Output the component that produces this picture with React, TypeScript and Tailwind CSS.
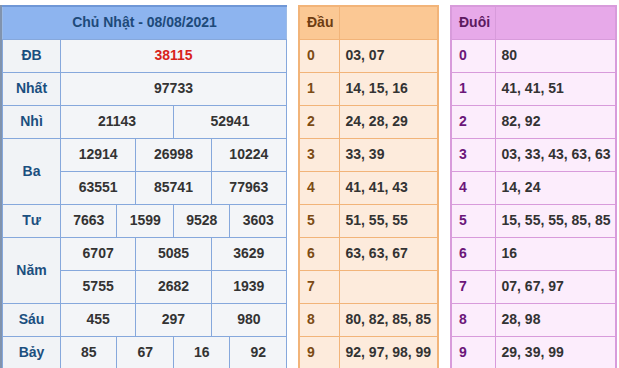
import React from "react";

const leftRows: { label: string; values: string[][]; red?: boolean }[] = [
  { label: "ĐB", values: [["38115"]], red: true },
  { label: "Nhất", values: [["97733"]] },
  { label: "Nhì", values: [["21143", "52941"]] },
  { label: "Ba", values: [["12914", "26998", "10224"], ["63551", "85741", "77963"]] },
  { label: "Tư", values: [["7663", "1599", "9528", "3603"]] },
  { label: "Năm", values: [["6707", "5085", "3629"], ["5755", "2682", "1939"]] },
  { label: "Sáu", values: [["455", "297", "980"]] },
  { label: "Bảy", values: [["85", "67", "16", "92"]] },
];

const dau = ["03, 07", "14, 15, 16", "24, 28, 29", "33, 39", "41, 41, 43", "51, 55, 55", "63, 63, 67", "", "80, 82, 85, 85", "92, 97, 98, 99"];
const duoi = ["80", "41, 41, 51", "82, 92", "03, 33, 43, 63, 63", "14, 24", "15, 55, 55, 85, 85", "16", "07, 67, 97", "28, 98", "29, 39, 99"];

export default function App() {
  return (
    <div
      className="w-[619px] h-[368px] overflow-hidden bg-white flex items-start pt-[5px]"
      style={{ fontFamily: '"Liberation Sans", Arial, sans-serif' }}
    >
      <div className="w-[2px] h-[363px] bg-[#8193ad]" />
      <table className="table-fixed border-collapse w-[285px] text-[14px] font-bold border border-[#9cbbe6]">
        <colgroup>
          <col className="w-[58px]" />
          {Array.from({ length: 12 }).map((_, i) => (
            <col key={i} />
          ))}
        </colgroup>
        <tbody>
          <tr className="h-[33px]">
            <td colSpan={13} className="bg-[#8db4ef] text-center text-[#1d4a7a] border-t-2 border-[#6f97d6] border-b border-b-[#86a8dc]">
              Chủ Nhật - 08/08/2021
            </td>
          </tr>
          {leftRows.map((r) =>
            r.values.map((line, li) => (
              <tr key={r.label + li} className="h-[33px]">
                {li === 0 && (
                  <td
                    rowSpan={r.values.length}
                    className="bg-[#f1f3f6] text-center text-[#1b4f7f] border border-[#86a8dc]"
                  >
                    {r.label}
                  </td>
                )}
                {line.map((v, vi) => (
                  <td
                    key={vi}
                    colSpan={12 / line.length}
                    className={`bg-[#f3f5f8] text-center border border-[#86a8dc] ${r.red ? "text-[#d8231b]" : "text-[#333333]"}`}
                  >
                    {v}
                  </td>
                ))}
              </tr>
            ))
          )}
        </tbody>
      </table>

      <table className="table-fixed border-collapse w-[141px] ml-[11px] text-[14px] font-bold border-2 border-[#f2b479]">
        <colgroup>
          <col className="w-[40px]" />
          <col />
        </colgroup>
        <tbody>
          <tr className="h-[33px] bg-[#fbc894]">
            <td className="pl-[7px] text-[#6e3d12] border border-[#f2b479]">Đầu</td>
            <td className="border border-[#f2b479]" />
          </tr>
          {dau.map((v, i) => (
            <tr key={i} className="h-[33px] bg-[#fdebdc]">
              <td className="pl-[7px] text-[#7c4b14] border border-[#f2b479]">{i}</td>
              <td className="pl-[6px] text-[#333333] border border-[#f2b479]">{v}</td>
            </tr>
          ))}
        </tbody>
      </table>

      <table className="table-fixed border-collapse w-[167px] ml-[11px] text-[14px] font-bold border-2 border-[#d89bdb]">
        <colgroup>
          <col className="w-[44px]" />
          <col />
        </colgroup>
        <tbody>
          <tr className="h-[33px] bg-[#e7a9e9]">
            <td className="pl-[7px] text-[#5c1a5f] border border-[#d89bdb]">Đuôi</td>
            <td className="border border-[#d89bdb]" />
          </tr>
          {duoi.map((v, i) => (
            <tr key={i} className="h-[33px] bg-[#fcedfc]">
              <td className="pl-[7px] text-[#6b1679] border border-[#d89bdb]">{i}</td>
              <td className="pl-[6px] text-[#333333] border border-[#d89bdb]">{v}</td>
            </tr>
          ))}
        </tbody>
      </table>
    </div>
  );
}
